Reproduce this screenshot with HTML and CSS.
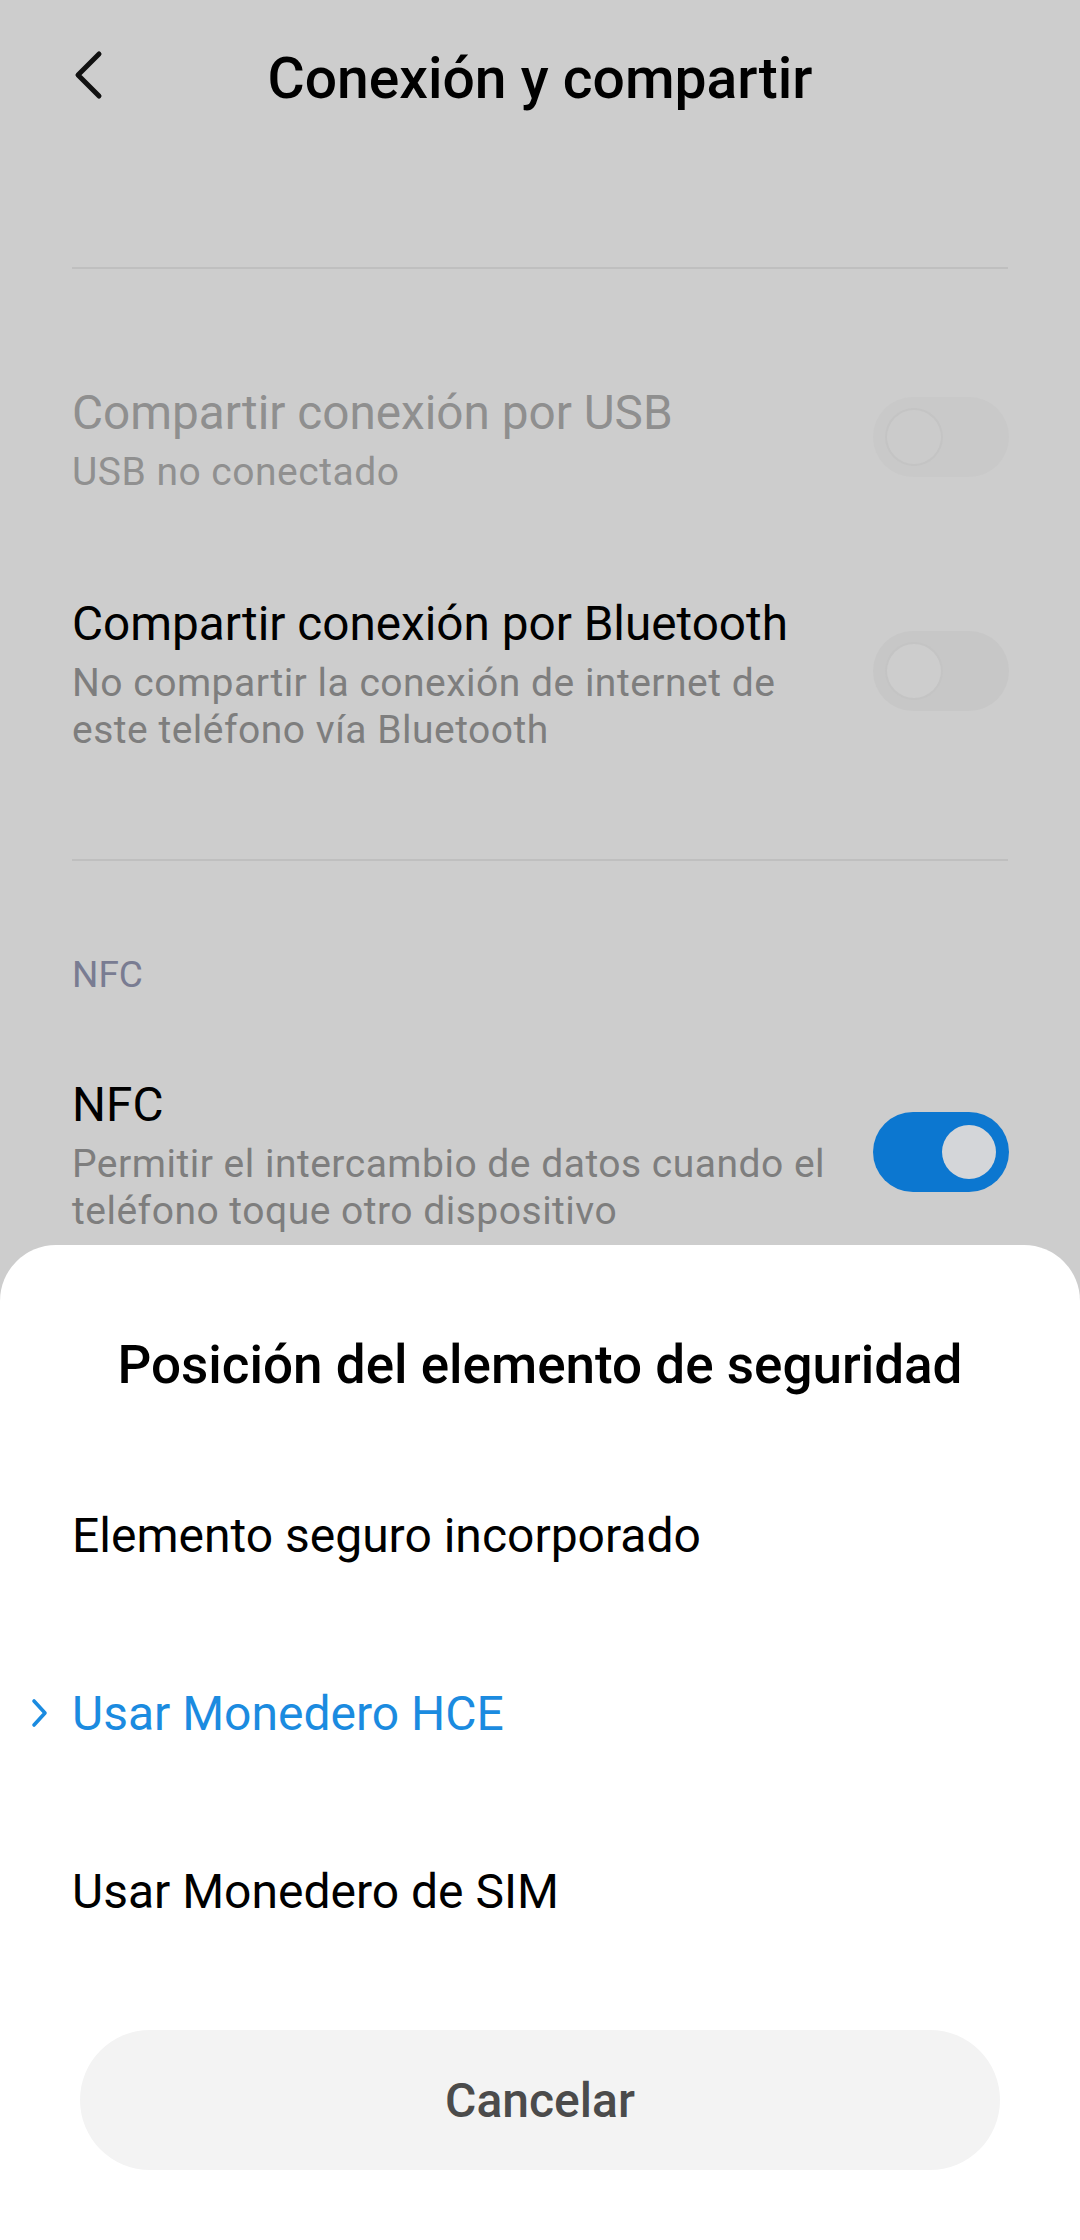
FILE: index.html
```html
<!DOCTYPE html>
<html lang="es">
<head>
<meta charset="utf-8">
<title>Conexión y compartir</title>
<link rel="stylesheet" href="styles.css">
</head>
<body>
<div class="screen">
  <header class="topbar">
    <div class="back">
      <svg class="back-icon" width="32" height="50" viewBox="0 0 32 50" aria-hidden="true">
        <path d="M27 4 L6 25 L27 46" fill="none" stroke="#111" stroke-width="5" stroke-linecap="round" stroke-linejoin="round"/>
      </svg>
    </div>
    <h1 class="title">Conexión y compartir</h1>
    <div></div>
  </header>

  <div class="divider first"></div>

  <section class="group">
    <div class="item usb">
      <div class="texts">
        <div class="item-title disabled">Compartir conexión por USB</div>
        <div class="item-sub disabled">USB no conectado</div>
      </div>
      <div class="toggle off disabled-toggle"><span class="knob"></span></div>
    </div>

    <div class="item bt">
      <div class="texts">
        <div class="item-title">Compartir conexión por Bluetooth</div>
        <div class="item-sub">No compartir la conexión de internet de<br>este teléfono vía Bluetooth</div>
      </div>
      <div class="toggle off"><span class="knob"></span></div>
    </div>
  </section>

  <div class="divider second"></div>

  <div class="section-label">NFC</div>

  <div class="item nfc">
    <div class="texts">
      <div class="item-title">NFC</div>
      <div class="item-sub">Permitir el intercambio de datos cuando el<br>teléfono toque otro dispositivo</div>
    </div>
    <div class="toggle on"><span class="knob"></span></div>
  </div>

  <div class="sheet">
    <h2 class="sheet-title">Posición del elemento de seguridad</h2>
    <ul class="options">
      <li class="option">Elemento seguro incorporado</li>
      <li class="option selected">
        <svg class="sel-icon" width="18" height="32" viewBox="0 0 18 32" aria-hidden="true">
          <path d="M3 4 L14 16 L3 28" fill="none" stroke="#1b8be0" stroke-width="3.6" stroke-linecap="round" stroke-linejoin="round"/>
        </svg>
        <span>Usar Monedero HCE</span>
      </li>
      <li class="option">Usar Monedero de SIM</li>
    </ul>
    <div class="cancel">Cancelar</div>
  </div>
</div>
</body>
</html>
```

FILE: styles.css
```css
* { box-sizing: border-box; }

html, body {
  margin: 0;
  padding: 0;
}

body {
  width: 1080px;
  height: 2240px;
  overflow: hidden;
  background: #cdcdcd;
  font-family: Roboto, "Noto Sans", "Liberation Sans", sans-serif;
  color: #000;
}

.screen {
  position: relative;
  width: 1080px;
  height: 2240px;
  padding-top: 39px;
  background: #cdcdcd;
}

.topbar {
  display: grid;
  grid-template-columns: 1fr auto 1fr;
  align-items: center;
  height: 80px;
}

.back {
  padding-left: 72px;
  display: flex;
  align-items: center;
}

.back-icon {
  margin-top: -8px;
}

.title {
  margin: 0;
  font-size: 57px;
  font-weight: 500;
  line-height: 80px;
  color: #000;
  white-space: nowrap;
}

.divider {
  height: 2px;
  margin: 0 72px;
  background: #bfbfbf;
}

.divider.first {
  margin-top: 148px;
}

.group {
  padding-top: 66px;
}

.item {
  display: flex;
  align-items: center;
  padding: 50px 71px 50px 72px;
  gap: 40px;
}

.texts {
  flex: 1;
  min-width: 0;
}

.item-title {
  font-size: 47.7px;
  line-height: 56px;
  color: #000;
  white-space: nowrap;
}

.item-sub {
  margin-top: 8px;
  font-size: 39px;
  line-height: 47px;
  letter-spacing: 0.5px;
  color: #7e7e7e;
  white-space: nowrap;
}

.item-title.disabled {
  color: #8f8f8f;
}

.item-sub.disabled {
  color: #909090;
}

.toggle {
  position: relative;
  flex: none;
  width: 136px;
  height: 80px;
  border-radius: 40px;
  margin-top: -8px;
}

.toggle .knob {
  position: absolute;
  top: 13px;
  width: 54px;
  height: 54px;
  border-radius: 50%;
}

.toggle.off {
  background: #c7c7c7;
}

.toggle.off .knob {
  left: 14px;
  background: #cdcdcd;
  box-shadow: 0 0 0 2px #c4c4c4;
}

.toggle.disabled-toggle {
  background: #c9c9c9;
}

.toggle.disabled-toggle .knob {
  background: #cbcbcb;
}

.toggle.on {
  background: #0c77d0;
}

.toggle.on .knob {
  right: 13px;
  background: #d4d6d9;
}

.divider.second {
  margin-top: 55px;
}

.section-label {
  margin: 94px 72px 0;
  font-size: 37px;
  line-height: 40px;
  color: #797c92;
}

.item.nfc {
  padding-top: 82px;
}

.sheet {
  position: absolute;
  left: 0;
  right: 0;
  bottom: 0;
  height: 995px;
  background: #fff;
  border-radius: 56px 56px 0 0;
  padding-top: 88px;
}

.sheet-title {
  margin: 0;
  text-align: center;
  font-size: 53px;
  font-weight: 500;
  line-height: 64px;
  color: #000;
}

.options {
  list-style: none;
  margin: 49px 0 0;
  padding: 0;
}

.option {
  display: flex;
  align-items: center;
  height: 178px;
  padding-left: 72px;
  font-size: 48px;
  color: #000;
}

.option.selected {
  padding-left: 31px;
  color: #1b8be0;
}

.sel-icon {
  margin-right: 23px;
  flex: none;
}

.cancel {
  margin: 50px 80px 0;
  height: 140px;
  border-radius: 70px;
  background: #f3f3f3;
  display: flex;
  align-items: center;
  justify-content: center;
  font-size: 48px;
  font-weight: 500;
  color: #4b4b4b;
}
```
